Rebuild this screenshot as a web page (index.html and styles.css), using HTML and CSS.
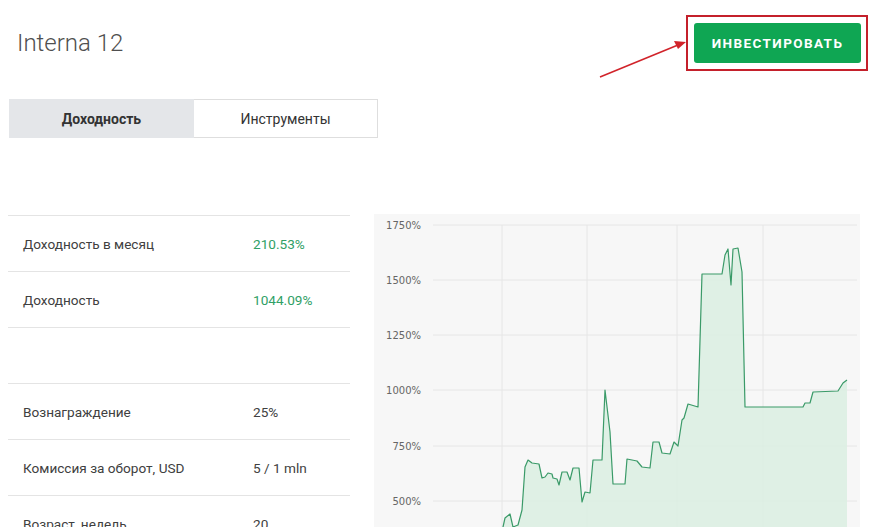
FILE: index.html
```html
<!DOCTYPE html>
<html lang="ru">
<head>
<meta charset="UTF-8">
<meta name="viewport" content="width=device-width, initial-scale=1.0">
<title>Interna 12</title>
<link rel="stylesheet" href="styles.css">
</head>
<body>

<header class="topo">
    <h1 class="titulo">Interna 12</h1>
    <div class="destaque">
        <button class="btn-investir">ИНВЕСТИРОВАТЬ</button>
        <svg class="seta" width="92" height="40" viewBox="0 0 92 40">
            <line x1="2" y1="39" x2="80" y2="7" stroke="#d1232a" stroke-width="1.5"/>
            <polygon points="88,4 76,3 80,11" fill="#d1232a"/>
        </svg>
    </div>
</header>

<div class="abas">
    <div class="aba ativa">Доходность</div>
    <div class="aba">Инструменты</div>
</div>

<main class="conteudo">
    <div class="tabela">
        <div class="linha"><span>Доходность в месяц</span><span class="verde">210.53%</span></div>
        <div class="linha"><span>Доходность</span><span class="verde">1044.09%</span></div>
        <div class="linha"></div>
        <div class="linha"><span>Вознаграждение</span><span>25%</span></div>
        <div class="linha"><span>Комиссия за оборот, USD</span><span>5 / 1 mln</span></div>
        <div class="linha"><span>Возраст, недель</span><span>20</span></div>
    </div>

    <div class="grafico">
        <svg width="486" height="320" viewBox="374 214 486 320">
            <g stroke="#e6e6e6" stroke-width="1">
                <line x1="433" y1="225" x2="857" y2="225"/>
                <line x1="433" y1="280" x2="857" y2="280"/>
                <line x1="433" y1="335" x2="857" y2="335"/>
                <line x1="433" y1="390" x2="857" y2="390"/>
                <line x1="433" y1="446" x2="857" y2="446"/>
                <line x1="433" y1="501" x2="857" y2="501"/>
                <line x1="502" y1="225" x2="502" y2="534"/>
                <line x1="587" y1="225" x2="587" y2="534"/>
                <line x1="677" y1="225" x2="677" y2="534"/>
                <line x1="763" y1="225" x2="763" y2="534"/>
            </g>
            <g class="eixo" text-anchor="end">
                <text x="421" y="229">1750%</text>
                <text x="421" y="284">1500%</text>
                <text x="421" y="339">1250%</text>
                <text x="421" y="394">1000%</text>
                <text x="421" y="450">750%</text>
                <text x="421" y="505">500%</text>
            </g>
            <path fill="#dbefe2" fill-opacity="0.85" d="M503,540 L503,527 505,518 510,514 513,527 518,525 522,510 525,467 528,460 532,463 539,464 542,478 545,477 548,473 552,474 553,478 557,479 559,485 562,472 567,472 570,480 573,468 579,468 582,502 585,492 590,493 593,460 602,460 605,390 610,432 613,484 625,484 627,459 637,461 642,467 650,468 653,442 659,442 662,453 670,454 674,442 678,446 682,420 684,418 688,404 698,407 702,274 722,274 725,255 728,249 731,285 733,249 738,248 742,272 745,407 803,407 805,403 810,403 813,392 838,391 843,383 847,380 L847,540 Z"/>
            <path fill="none" stroke="#3a9a68" stroke-width="1.2" stroke-linejoin="round" d="M503,540 L503,527 505,518 510,514 513,527 518,525 522,510 525,467 528,460 532,463 539,464 542,478 545,477 548,473 552,474 553,478 557,479 559,485 562,472 567,472 570,480 573,468 579,468 582,502 585,492 590,493 593,460 602,460 605,390 610,432 613,484 625,484 627,459 637,461 642,467 650,468 653,442 659,442 662,453 670,454 674,442 678,446 682,420 684,418 688,404 698,407 702,274 722,274 725,255 728,249 731,285 733,249 738,248 742,272 745,407 803,407 805,403 810,403 813,392 838,391 843,383 847,380"/>
        </svg>
    </div>
</main>

</body>
</html>
```

FILE: styles.css
```css
:root {
    --texto: #333333;
    --verde: #0fa653;
    --borda: #e4e4e4;
    --vermelho: #c4202b;
}
body {
    margin: 0;
    font-family: Roboto, "Liberation Sans", Arial, sans-serif;
    color: var(--texto);
    background: #ffffff;
    overflow: hidden;
}
.topo {
    display: flex;
    justify-content: space-between;
    align-items: center;
    padding: 15px 5px 0 17px;
}
.titulo {
    margin: 0;
    font-size: 24px;
    font-weight: 300;
    line-height: 28px;
    color: #4f4f4f;
}
.destaque {
    position: relative;
    border: 2px solid var(--vermelho);
    padding: 6px 5px 6px 6px;
}
.btn-investir {
    display: block;
    width: 167px;
    height: 40px;
    border: none;
    border-radius: 3px;
    background: var(--verde);
    color: #fff;
    font-family: Roboto, sans-serif;
    font-size: 13.5px;
    font-weight: 700;
    letter-spacing: 1.4px;
    cursor: pointer;
}
.seta {
    position: absolute;
    left: -90px;
    top: 21px;
}
.abas {
    display: flex;
    margin: 28px 0 0 9px;
    width: 369px;
    height: 39px;
    box-sizing: border-box;
    border: 1px solid #dedede;
}
.aba {
    flex: 1;
    display: flex;
    align-items: center;
    justify-content: center;
    font-size: 14px;
}
.aba.ativa {
    flex: 0 0 185px;
    margin: -1px 0 -1px -1px;
    background: #e4e6e9;
    font-weight: 700;
}
.conteudo {
    display: flex;
    gap: 24px;
    margin-top: 76px;
    padding-left: 8px;
}
.tabela {
    width: 342px;
    margin-top: 1px;
}
.linha {
    display: grid;
    grid-template-columns: 230px 1fr;
    align-items: center;
    height: 56px;
    box-sizing: border-box;
    border-top: 1px solid var(--borda);
    padding-left: 15px;
    font-size: 13.6px;
    color: #404040;
}
.verde {
    color: #30a066;
}
.grafico {
    width: 486px;
    height: 320px;
    background: #f7f7f7;
}
.grafico svg {
    display: block;
}
.eixo text {
    font-family: "DejaVu Sans", Verdana, sans-serif;
    font-size: 10px;
    fill: #666666;
}
```
